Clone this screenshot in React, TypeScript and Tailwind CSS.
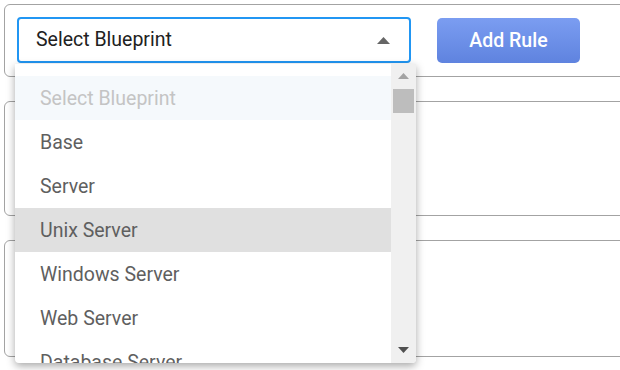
import React from "react";

const options = [
  "Select Blueprint",
  "Base",
  "Server",
  "Unix Server",
  "Windows Server",
  "Web Server",
  "Database Server",
];

function Card({ className, children }: { className: string; children?: React.ReactNode }) {
  return (
    <div className={`mr-[-12px] rounded-[6px] border border-[#a3a3a3] bg-white ${className}`}>
      {children}
    </div>
  );
}

export default function App() {
  return (
    <div
      className="h-[370px] w-[620px] overflow-hidden bg-white p-[4px]"
      style={{ fontFamily: "Roboto, 'Liberation Sans', sans-serif" }}
    >
      <div className="flex flex-col gap-[24px]">
        <Card className="relative z-10 h-[73px]">
          <div className="flex items-start gap-[26px] pl-[12px] pt-[12px]">
            <div className="relative">
              <div className="flex h-[46px] w-[394px] items-center justify-between rounded-[4px] border-2 border-[#2196f3] bg-white pl-[17px] pr-[19px]">
                <span className="text-[19.5px] text-[#212121]">Select Blueprint</span>
                <svg width="13" height="7" viewBox="0 0 13 7">
                  <path d="M0 7 L6.5 0 L13 7 Z" fill="#666" />
                </svg>
              </div>
              <div className="absolute left-[-2px] top-[47px] flex h-[299px] w-[401px] overflow-hidden rounded-b-[4px] bg-white shadow-[0_3px_8px_rgba(0,0,0,0.35)]">
                <ul className="flex-1 pt-[12px]">
                  {options.map((o, i) => (
                    <li
                      key={o}
                      className={`flex h-[44px] items-center pl-[25px] pt-[2px] text-[19.5px] ${
                        i === 0
                          ? "bg-[#f5f9fc] text-[#c4c4c4]"
                          : i === 3
                          ? "bg-[#e0e0e0] text-[#5f5f5f]"
                          : "text-[#5f5f5f]"
                      }`}
                    >
                      {o}
                    </li>
                  ))}
                </ul>
                <div className="flex w-[25px] flex-col items-center bg-[#f0f0f0] pt-[9px]">
                  <svg width="11" height="6" viewBox="0 0 11 6">
                    <path d="M0 6 L5.5 0 L11 6 Z" fill="#a3a3a3" />
                  </svg>
                  <div className="mt-[10px] h-[24px] w-[21px] bg-[#bdbdbd]" />
                  <div className="flex-1" />
                  <svg className="mb-[10px]" width="11" height="6" viewBox="0 0 11 6">
                    <path d="M0 0 L5.5 6 L11 0 Z" fill="#505050" />
                  </svg>
                </div>
              </div>
            </div>
            <button className="mt-[1px] h-[45px] w-[143px] rounded-[5px] bg-gradient-to-b from-[#7b9df1] to-[#5f83df] text-[19.5px] font-medium text-white">
              Add Rule
            </button>
          </div>
        </Card>
        <Card className="h-[115px]" />
        <Card className="h-[117px]" />
      </div>
    </div>
  );
}
